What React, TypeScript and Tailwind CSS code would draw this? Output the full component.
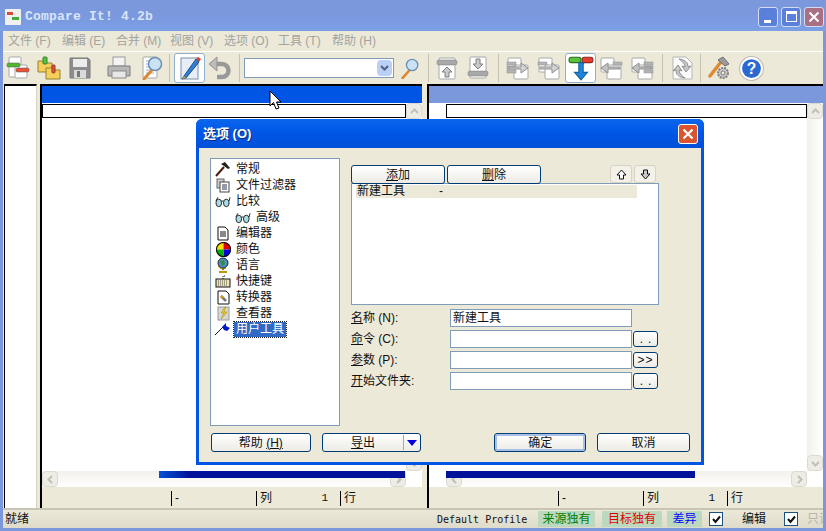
import type { ReactNode } from "react";

const CJK = "font-['Liberation_Sans','Noto_Sans_CJK_SC',sans-serif]";

/** 工具栏图标，24x24 画布 */
function Doc({ x = 4, y = 3, w = 13, h = 17 }: { x?: number; y?: number; w?: number; h?: number }) {
  return <rect x={x} y={y} width={w} height={h} fill="#fff" stroke="#a8a8a8" rx="1" />;
}

function Bar({ x, y, w, c, h = 4 }: { x: number; y: number; w: number; c: string; h?: number }) {
  return <rect x={x} y={y} width={w} height={h} rx="1.5" fill={c} stroke="#555" strokeWidth="0.5" />;
}

function ToolIcon({ children, size = 24 }: { children: ReactNode; size?: number }) {
  return (
    <svg width={size} height={size} viewBox="0 0 24 24" aria-hidden="true">
      {children}
    </svg>
  );
}

function Magnifier() {
  return (
    <g>
      <path d="M12 14 L4 23" stroke="#d98a33" strokeWidth="3" strokeLinecap="round" />
      <circle cx="15" cy="8" r="6.5" fill="#c9e2f5" stroke="#6d8fb3" strokeWidth="1.5" />
    </g>
  );
}

function Sep({ className }: { className: string }) {
  return <div className={`w-px h-[28px] bg-[#c5c2b0] ${className}`} />;
}

function PageArrow({ dir, count }: { dir: "left" | "right"; count: number }) {
  return (
    <ToolIcon>
      <Doc x={2} y={2} w={13} h={14} />
      <Doc x={8} y={9} w={14} h={14} />
      {Array.from({ length: count }).map((_, i) => (
        <rect key={i} x={dir === "right" ? 1 : 14} y={6 + i * 4} width={9} height={3} fill="#b5b5b5" stroke="#8e8e8e" strokeWidth="0.5" />
      ))}
      {dir === "right" ? (
        <path d="M3 11 H15 V7 L22 12 L15 17 V13 H3 Z" fill="#d2d2d2" stroke="#8f8f8f" />
      ) : (
        <path d="M21 11 H9 V7 L2 12 L9 17 V13 H21 Z" fill="#c2c2c2" stroke="#8f8f8f" />
      )}
    </ToolIcon>
  );
}

function Toolbar() {
  return (
    <div className="h-[33px] flex items-center bg-[#ece9d8] border-t border-white shrink-0 pl-[3px]">
      <ToolIcon>
        <Doc x={3} y={1} w={12} h={20} />
        <Doc x={9} y={9} w={12} h={13} />
        <Bar x={1} y={7} w={13} c="#4fb82e" />
        <Bar x={10} y={12} w={13} c="#e8503a" />
      </ToolIcon>
      <div className="ml-[7px]">
        <ToolIcon>
          <path d="M1 5h7l2 2h5v9H1z" fill="#f4cf5a" stroke="#97802c" />
          <path d="M9 12h7l2 2h5v9H9z" fill="#f4cf5a" stroke="#97802c" />
          <rect x="6" y="1" width="4" height="7" rx="1" fill="#55c23c" stroke="#3d7e2c" />
          <rect x="15" y="9" width="3" height="8" rx="1" fill="#e8503a" stroke="#9c3020" />
        </ToolIcon>
      </div>
      <div className="ml-[7px]">
        <ToolIcon>
          <path d="M2 2 H20 L22 4 V22 H2 Z" fill="#8d8d8d" stroke="#7a7a7a" />
          <rect x="5" y="3" width="14" height="8" fill="#ececec" />
          <rect x="6" y="14" width="12" height="8" fill="#dadada" />
          <rect x="9" y="15" width="3" height="6" fill="#777" />
        </ToolIcon>
      </div>
      <div className="ml-[15px]">
        <ToolIcon>
          <rect x="6" y="1" width="12" height="9" fill="#f4f4f4" stroke="#9a9a9a" />
          <path d="M1 10 H23 V20 H1 Z" fill="#b7b7b7" stroke="#7f7f7f" />
          <rect x="5" y="15" width="14" height="7" fill="#e8e8e8" stroke="#8a8a8a" />
        </ToolIcon>
      </div>
      <div className="ml-[9px]">
        <ToolIcon>
          <Doc x={3} y={1} w={14} h={21} />
          <path d="M6 5h8M6 8h8M6 11h5M6 14h5M6 17h8" stroke="#9db3cc" />
          <Magnifier />
        </ToolIcon>
      </div>
      <Sep className="ml-[5px]" />
      <div className="ml-[4px] w-[31px] h-[30px] flex items-center justify-center bg-white border border-[#8eb0cc] rounded-[3px]">
        <ToolIcon>
          <rect x="3" y="2" width="17" height="21" fill="#e8eef8" stroke="#7b8fa8" />
          <path d="M6 20 L4 23 L8 22 L21 6 L18 3 Z" fill="#2f7fd6" stroke="#1c4d8a" />
          <path d="M18 3 L21 6 L23 3 L20 1 Z" fill="#d8433a" />
          <path d="M6 20 L4 23 L8 22 Z" fill="#caa34a" />
        </ToolIcon>
      </div>
      <div className="ml-[3px]">
        <ToolIcon>
          <path d="M6 8 H14 A6.5 6.5 0 0 1 14 21 H9" fill="none" stroke="#999" strokeWidth="4.5" />
          <path d="M1 8 L9 1 V15 Z" fill="#bcbcbc" stroke="#949494" />
        </ToolIcon>
      </div>
      <Sep className="ml-[7px]" />
      <div className="ml-[4px] w-[150px] h-[20px] bg-white border border-[#7f9db9] flex justify-end items-center pr-px">
        <div className="w-[15px] h-[16px] bg-[#bcd0f5] rounded-sm flex items-center justify-center">
          <svg width="9" height="6" viewBox="0 0 9 6" aria-hidden="true">
            <path d="M1 1 L4.5 4.5 L8 1" fill="none" stroke="#4d6185" strokeWidth="2" />
          </svg>
        </div>
      </div>
      <div className="ml-[5px]">
        <ToolIcon size={21}>
          <Magnifier />
        </ToolIcon>
      </div>
      <Sep className="ml-[8px]" />
      <div className="ml-[6px]">
        <ToolIcon>
          <Doc x={4} y={2} w={16} h={21} />
          <rect x="2" y="4" width="20" height="5" rx="2" fill="#a9a9a9" stroke="#777" strokeWidth="0.5" />
          <path d="M12 11 L17 16 H14 V21 H10 V16 H7 Z" fill="#c9c9c9" stroke="#808080" />
        </ToolIcon>
      </div>
      <div className="ml-[7px]">
        <ToolIcon>
          <Doc x={4} y={1} w={16} h={21} />
          <rect x="2" y="15" width="20" height="5" rx="2" fill="#a9a9a9" stroke="#777" strokeWidth="0.5" />
          <path d="M12 13 L7 8 H10 V3 H14 V8 H17 Z" fill="#c9c9c9" stroke="#808080" />
        </ToolIcon>
      </div>
      <Sep className="ml-[8px]" />
      <div className="ml-[7px]">
        <PageArrow dir="right" count={3} />
      </div>
      <div className="ml-[7px]">
        <PageArrow dir="right" count={1} />
      </div>
      <div className="ml-[4px] w-[31px] h-[30px] flex items-center justify-center bg-white border border-[#8eb0cc] rounded-[3px]">
        <ToolIcon size={26}>
          <path d="M12 8 C11 6 9 5 6 5" fill="none" stroke="#555" />
          <path d="M14 8 C15 6 16 5 18 5" fill="none" stroke="#555" />
          <rect x="1" y="2" width="11" height="5" rx="2" fill="#57c23a" stroke="#2f6b20" />
          <rect x="13" y="2" width="10" height="5" rx="2" fill="#e43e2e" stroke="#8a2a20" />
          <path d="M10 7 H14 V16 H18 L12 23 L6 16 H10 Z" fill="#1d86dc" stroke="#15609f" />
        </ToolIcon>
      </div>
      <div className="ml-[3px]">
        <PageArrow dir="left" count={1} />
      </div>
      <div className="ml-[7px]">
        <PageArrow dir="left" count={3} />
      </div>
      <Sep className="ml-[8px]" />
      <div className="ml-[7px]">
        <ToolIcon>
          <path d="M3 1 H16 L22 7 V23 H3 Z" fill="#fafafa" stroke="#b5b5b5" />
          <path d="M9 3 C15 4 18 6 18 11 L21 10 L16 16 L12 10 L15 11 C15 8 13 6 9 3Z" fill="#c8c8c8" stroke="#8f8f8f" />
          <path d="M15 22 C9 21 6 19 6 14 L3 15 L8 9 L12 15 L9 14 C9 17 11 19 15 22Z" fill="#c8c8c8" stroke="#8f8f8f" />
        </ToolIcon>
      </div>
      <Sep className="ml-[6px]" />
      <div className="ml-[7px]">
        <ToolIcon>
          <circle cx="15" cy="17" r="5" fill="#c8c8c8" stroke="#808080" strokeWidth="2" strokeDasharray="2 1" />
          <circle cx="15" cy="17" r="2" fill="#ece9d8" stroke="#808080" />
          <path d="M2 20 L13 6" stroke="#de8a32" strokeWidth="3.5" strokeLinecap="round" />
          <path d="M10 4 L15 1 L21 8 L17 10 Z" fill="#9b9b9b" stroke="#6b6b6b" />
        </ToolIcon>
      </div>
      <div className="ml-[7px]">
        <ToolIcon size={25}>
          <circle cx="12" cy="12" r="11.5" fill="#fff" stroke="#b9b9b9" />
          <circle cx="12" cy="12" r="9" fill="#2c68d2" />
          <text x="12" y="17.5" textAnchor="middle" fontSize="15" fontWeight="700" fill="#fff" fontFamily="Liberation Sans, sans-serif">
            ?
          </text>
        </ToolIcon>
      </div>
    </div>
  );
}

function ScrollBtn({ d, className = "" }: { d: string; className?: string }) {
  return (
    <div className={`w-[16px] h-[16px] bg-[#eeede5] border border-[#dcdad0] rounded-sm flex items-center justify-center shrink-0 ${className}`}>
      <svg width="9" height="9" viewBox="0 0 9 9" aria-hidden="true">
        <path d={d} fill="none" stroke="#c0c0b8" strokeWidth="2" />
      </svg>
    </div>
  );
}

function Pane({ width, header, indent, barClass }: { width: string; header: string; indent: string; barClass: string }) {
  return (
    <div className={`${width} shrink-0 flex flex-col border-l-2 border-black relative`}>
      <div className={`h-[19px] border-t-2 border-black ${header}`} />
      <div className="flex-1 flex min-h-0 bg-white">
        <div className={`flex-1 flex flex-col min-w-0 ${indent}`}>
          <div className="h-[14px] mt-px border border-black bg-white" />
          <div className="flex-1" />
          <div className="flex h-[16px] bg-gradient-to-b from-[#f2f1ea] to-white">
            <ScrollBtn d="M6 1 L2.5 4.5 L6 8" />
            <div className="flex-1" />
            <ScrollBtn d="M3 1 L6.5 4.5 L3 8" />
          </div>
        </div>
        <div className="w-[16px] shrink-0 flex flex-col mb-[16px] bg-gradient-to-r from-[#f2f1ea] to-white">
          <ScrollBtn d="M1 6 L4.5 2.5 L8 6" />
          <div className="flex-1" />
          <ScrollBtn d="M1 3 L4.5 6.5 L8 3" />
        </div>
        <div className={`absolute bottom-[30px] h-[7px] ${barClass}`} />
      </div>
      <div className="h-[21px] bg-[#ece9d8] text-[12px] text-[#111] flex items-start pt-[4px]">
        <div className="flex w-full pl-[129px]">
          <span className="w-[85px] border-l border-black h-[15px] leading-[15px] pl-[3px]">-</span>
          <span className="w-[84px] border-l border-black h-[15px] leading-[15px] pl-[3px] flex justify-between pr-[12px]">
            <span>列</span>
            <span className="font-['Liberation_Mono',monospace] text-[11px]">1</span>
          </span>
          <span className="border-l border-black h-[15px] leading-[15px] pl-[3px]">行</span>
        </div>
      </div>
    </div>
  );
}

function TreeRow({ icon, label, selected, indent }: { icon: ReactNode; label: string; selected?: boolean; indent?: boolean }) {
  return (
    <div className={`h-[16px] flex items-center ${indent ? "pl-[24px]" : "pl-[4px]"}`}>
      <span className="w-[16px] h-[16px] flex items-center justify-center shrink-0">{icon}</span>
      <span className={`ml-[3px] h-[15px] leading-[15px] px-[2px] ${selected ? "bg-[#316ac5] text-white outline-1 outline-dotted outline-[#222]" : ""}`}>{label}</span>
    </div>
  );
}

function Glasses() {
  return (
    <svg width="17" height="13" viewBox="0 0 17 13" aria-hidden="true">
      <ellipse cx="4" cy="8" rx="3" ry="4" fill="#a9dbe6" stroke="#222" />
      <ellipse cx="12" cy="8" rx="3" ry="4" fill="#a9dbe6" stroke="#222" />
      <path d="M7 6 L9 6 M1 6 L3 2 M15 6 L16 2" stroke="#222" fill="none" />
    </svg>
  );
}

function XpBtn({ children, className = "", primary }: { children: ReactNode; className?: string; primary?: boolean }) {
  return (
    <button
      type="button"
      className={`h-[19px] flex items-center justify-center rounded-[3px] border border-[#003c74] bg-gradient-to-b from-white to-[#ecebe5] text-[12px] leading-none text-[#111] ${primary ? "shadow-[inset_0_0_0_2px_#a6c0e8]" : ""} ${className}`}
    >
      {children}
    </button>
  );
}

function Field({ label, hot, value, btn }: { label: string; hot: string; value?: string; btn?: string }) {
  return (
    <div className="flex items-center h-[18px] mb-[3px]">
      <span className="w-[99px] text-[12px] text-[#111]">
        <span className="underline">{hot}</span>
        {label}
      </span>
      <div className="w-[182px] h-[18px] border border-[#7f9db9] bg-white text-[12px] leading-[16px] pl-[2px] text-[#111]">{value}</div>
      {btn && <XpBtn className={`ml-[1px] w-[25px] !h-[16px] text-[11px] ${btn === ".." ? "tracking-[5px] pl-[5px]" : "tracking-[1px]"}`}>{btn}</XpBtn>}
    </div>
  );
}

function Dialog() {
  return (
    <div className={`absolute left-[196px] top-[119px] w-[508px] h-[346px] flex flex-col rounded-t-[6px] bg-[#0055e5] ${CJK} text-[12px] text-[#111]`}>
      <div className="h-[29px] shrink-0 flex items-center justify-between pl-[7px] pr-[6px] bg-gradient-to-b from-[#0a66ee] via-[#0055e5] to-[#0250d8] rounded-t-[6px]">
        <span className="text-white font-bold text-[13px] [text-shadow:1px_1px_#0a2a80]">选项 (O)</span>
        <div className="w-[20px] h-[20px] rounded-[3px] border border-white bg-[#d9542f] flex items-center justify-center">
          <svg width="12" height="12" viewBox="0 0 12 12" aria-hidden="true">
            <path d="M1.5 1.5 L10.5 10.5 M10.5 1.5 L1.5 10.5" stroke="#fff" strokeWidth="2.2" />
          </svg>
        </div>
      </div>
      <div className="mx-[3px] mb-[3px] flex-1 bg-[#ece9d8] flex flex-col px-[11px] pt-[10px] min-h-0">
        <div className="flex h-[268px]">
          <div className="w-[130px] border border-[#7f9db9] bg-white pt-[2px]">
            <TreeRow
              label="常规"
              icon={
                <svg width="16" height="16" viewBox="0 0 16 16" aria-hidden="true">
                  <path d="M1 15 L9 6" stroke="#4a1a10" strokeWidth="2" />
                  <path d="M6 3 L10 1 L15 7 L13 8 L9 5 Z" fill="#222" />
                </svg>
              }
            />
            <TreeRow
              label="文件过滤器"
              icon={
                <svg width="14" height="15" viewBox="0 0 14 15" aria-hidden="true">
                  <rect x="1" y="1" width="7" height="9" fill="#ccc" stroke="#666" />
                  <rect x="4" y="4" width="9" height="10" fill="#fff" stroke="#444" />
                  <path d="M6 7h5M6 9h5M6 11h5" stroke="#335" />
                </svg>
              }
            />
            <TreeRow label="比较" icon={<Glasses />} />
            <TreeRow label="高级" indent icon={<Glasses />} />
            <TreeRow
              label="编辑器"
              icon={
                <svg width="12" height="15" viewBox="0 0 12 15" aria-hidden="true">
                  <path d="M1 1 H8 L11 4 V14 H1 Z" fill="#fff" stroke="#111" />
                  <path d="M3 6h6M3 8h6M3 10h6" stroke="#111" />
                </svg>
              }
            />
            <TreeRow
              label="颜色"
              icon={
                <svg width="15" height="15" viewBox="0 0 14 14" aria-hidden="true">
                  <path d="M7 7 V0 A7 7 0 0 0 0 7 Z" fill="#ffe000" />
                  <path d="M7 7 V0 A7 7 0 0 1 14 7 Z" fill="#e00000" />
                  <path d="M7 7 H14 A7 7 0 0 1 7 14 Z" fill="#0000e0" />
                  <path d="M7 7 V14 A7 7 0 0 1 0 7 Z" fill="#00b000" />
                  <circle cx="7" cy="7" r="6.6" fill="none" stroke="#111" />
                </svg>
              }
            />
            <TreeRow
              label="语言"
              icon={
                <svg width="14" height="16" viewBox="0 0 14 16" aria-hidden="true">
                  <path d="M2 9 A5.5 5.5 0 0 0 10 11" fill="none" stroke="#b8960f" />
                  <circle cx="7" cy="6" r="5" fill="#4a90c8" stroke="#223" />
                  <path d="M4 4 L8 3 L9 7 L6 9 Z" fill="#3b8a3b" />
                  <path d="M7 11 V13" stroke="#8a6d10" strokeWidth="2" />
                  <path d="M3 15 H11" stroke="#b8960f" strokeWidth="2" />
                </svg>
              }
            />
            <TreeRow
              label="快捷键"
              icon={
                <svg width="16" height="13" viewBox="0 0 16 13" aria-hidden="true">
                  <rect x="1" y="4" width="14" height="8" fill="#f0e6b0" stroke="#111" />
                  <path d="M3 6h10M3 8h10M3 10h10" stroke="#555" strokeDasharray="1 1" />
                  <path d="M8 4 V1 H11" fill="none" stroke="#111" strokeDasharray="1 1" />
                </svg>
              }
            />
            <TreeRow
              label="转换器"
              icon={
                <svg width="13" height="15" viewBox="0 0 13 15" aria-hidden="true">
                  <path d="M1 1 H9 L12 4 V14 H1 Z" fill="#fff" stroke="#111" />
                  <path d="M4 6 L9 11" stroke="#777" strokeWidth="2.5" />
                  <path d="M4 6 L6 8" stroke="#c8a020" strokeWidth="2.5" />
                </svg>
              }
            />
            <TreeRow
              label="查看器"
              icon={
                <svg width="13" height="15" viewBox="0 0 13 15" aria-hidden="true">
                  <rect x="1" y="1" width="11" height="13" fill="#d8d8d0" stroke="#999" />
                  <path d="M8 1 L4 7 H7 L4 13 L10 6 H7 L9 1 Z" fill="#f0d020" stroke="#998010" strokeWidth="0.5" />
                </svg>
              }
            />
            <TreeRow
              label="用户工具"
              selected
              icon={
                <svg width="16" height="14" viewBox="0 0 16 14" aria-hidden="true">
                  <path d="M0 13 L8 5" stroke="#111" />
                  <path d="M7 5 L11 1 L11 4 L15 6 L12 9 L9 8 Z" fill="#0018c8" />
                </svg>
              }
            />
          </div>
          <div className="ml-[11px] w-[308px] flex flex-col">
            <div className="flex h-[18px] mt-[7px] relative z-10">
              <XpBtn className="w-[94px]">
                <span className="underline">添</span>加
              </XpBtn>
              <XpBtn className="ml-[2px] w-[94px]">
                <span className="underline">删</span>除
              </XpBtn>
              <button type="button" className="ml-[69px] w-[22px] h-[18px] border border-[#d6d3c2] rounded-[3px] bg-[#f3f1e8] flex items-center justify-center">
                <svg width="11" height="11" viewBox="0 0 11 11" aria-hidden="true">
                  <path d="M5.5 1 L10 6 H7.5 V10 H3.5 V6 H1 Z" fill="#fff" stroke="#111" />
                </svg>
              </button>
              <button type="button" className="ml-[2px] w-[22px] h-[18px] border border-[#d6d3c2] rounded-[3px] bg-[#f3f1e8] flex items-center justify-center">
                <svg width="11" height="11" viewBox="0 0 11 11" aria-hidden="true">
                  <path d="M5.5 10 L10 5 H7.5 V1 H3.5 V5 H1 Z" fill="#c8c8c8" stroke="#111" />
                </svg>
              </button>
            </div>
            <div className="h-[122px] border border-[#7f9db9] bg-white pt-px pl-[4px]">
              <div className="w-[281px] h-[13px] leading-[13px] bg-[#ece9d8] pl-px flex">
                <span className="w-[82px]">新建工具</span>
                <span>-</span>
              </div>
            </div>
            <div className="mt-[4px]">
              <Field hot="名" label="称 (N):" value="新建工具" />
              <Field hot="命" label="令 (C):" btn=".." />
              <Field hot="参" label="数 (P):" btn=">>" />
              <Field hot="开" label="始文件夹:" btn=".." />
            </div>
          </div>
        </div>
        <div className="flex mt-[7px] ml-px">
          <XpBtn className="w-[100px]">
            帮助&nbsp;<span className="underline">(H)</span>
          </XpBtn>
          <button type="button" className="ml-[11px] w-[100px] h-[19px] rounded-[3px] border border-[#003c74] bg-gradient-to-b from-white to-[#ecebe5] flex items-center text-[12px]">
            <span className="flex-1 text-center"><span className="underline">导</span>出</span>
            <span className="w-[17px] h-[15px] border-l border-[#a8a8a8] flex items-center justify-center">
              <svg width="10" height="6" viewBox="0 0 10 6" aria-hidden="true">
                <path d="M0 0 H10 L5 6 Z" fill="#0000e0" />
              </svg>
            </span>
          </button>
          <XpBtn primary className="ml-[73px] w-[92px]">确定</XpBtn>
          <XpBtn className="ml-[11px] w-[93px]">取消</XpBtn>
        </div>
      </div>
    </div>
  );
}

function Check() {
  return (
    <span className="w-[14px] h-[14px] border border-[#1c5180] bg-white flex items-center justify-center shrink-0">
      <svg width="9" height="9" viewBox="0 0 9 9" aria-hidden="true">
        <path d="M1 4 L3.5 7 L8 1.5" fill="none" stroke="#111" strokeWidth="2" />
      </svg>
    </span>
  );
}

export default function App() {
  const menus = ["文件 (F)", "编辑 (E)", "合并 (M)", "视图 (V)", "选项 (O)", "工具 (T)", "帮助 (H)"];
  return (
    <div className={`relative w-[826px] h-[531px] overflow-hidden flex flex-col bg-[#7b98dd] ${CJK}`}>
      <div className="h-[31px] shrink-0 flex items-center justify-between pl-[5px] pr-[2px] pt-[2px] bg-gradient-to-b from-[#7b98dd] via-[#7b98dd] to-[#7aa0e6]">
        <div className="flex items-center">
          <svg width="16" height="16" viewBox="0 0 16 16" aria-hidden="true">
            <rect x="0" y="0" width="16" height="16" rx="1" fill="#f0f0ee" />
            <rect x="2" y="3" width="6" height="3" fill="#d94a3a" />
            <rect x="7" y="8" width="7" height="3" fill="#3fae3a" />
          </svg>
          <span className="ml-[4px] font-['Liberation_Mono',monospace] font-bold text-[13px] text-[#d8e4f8] tracking-[0.2px]">Compare It! 4.2b</span>
        </div>
        <div className="flex gap-[3px]">
          <div className="w-[20px] h-[20px] rounded-[3px] border border-[#d4dcf2] bg-[#5a80dc] flex items-end pl-[5px] pb-[3px]">
            <span className="w-[7px] h-[3px] bg-white" />
          </div>
          <div className="w-[20px] h-[20px] rounded-[3px] border border-[#d4dcf2] bg-[#5a80dc] flex items-center justify-center">
            <span className="w-[11px] h-[11px] border border-white border-t-[3px]" />
          </div>
          <div className="w-[20px] h-[20px] rounded-[3px] border border-[#d4dcf2] bg-[#ab6f84] flex items-center justify-center">
            <svg width="12" height="12" viewBox="0 0 12 12" aria-hidden="true">
              <path d="M1.5 1.5 L10.5 10.5 M10.5 1.5 L1.5 10.5" stroke="#fff" strokeWidth="2" />
            </svg>
          </div>
        </div>
      </div>
      <div className="flex-1 mx-[3px] mb-[3px] flex flex-col min-h-0 bg-[#ece9d8]">
        <div className="h-[20px] shrink-0 flex items-center pl-[5px] text-[12px] text-[#a3a3a0]">
          {menus.map((m) => (
            <span key={m} className="w-[54px]">{m}</span>
          ))}
        </div>
        <Toolbar />
        <div className="flex-1 flex min-h-0 pl-px">
          <div className="w-[33px] border-t-2 border-x border-t-black border-l-black border-r-[#d8d5c5] bg-white shrink-0" />
          <div className="w-[3px] shrink-0" />
          <Pane width="w-[382px]" header="bg-[#0055e5]" indent="" barClass="left-[117px] right-[17px] bg-gradient-to-r from-[#0a50d8] to-[#00129a] to-[12%]" />
          <div className="w-[5px] shrink-0" />
          <Pane width="w-[396px]" header="bg-[#7b98dd]" indent="ml-[17px]" barClass="left-[17px] w-[249px] bg-[#00129a]" />
        </div>
        <div className="h-[20px] shrink-0 border-t-2 border-[#c8c5b4] bg-gradient-to-b from-[#ece9d8] to-[#dedbca] flex items-center text-[12px] text-[#111] overflow-hidden">
          <span className="pl-[2px] w-[434px] shrink-0">就绪</span>
          <span className="w-[98px] shrink-0 font-['DejaVu_Sans_Mono',monospace] text-[10px] whitespace-nowrap">Default Profile</span>
          <span className="ml-[3px] w-[57px] shrink-0 h-[16px] leading-[16px] text-center bg-[#bcd9c0] text-[#008000]">来源独有</span>
          <span className="ml-[7px] w-[60px] shrink-0 h-[16px] leading-[16px] text-center bg-[#bcd9c0] text-[#e00000]">目标独有</span>
          <span className="ml-[5px] w-[35px] shrink-0 h-[16px] leading-[16px] text-center bg-[#bcd9c0] text-[#0000ff]">差异</span>
          <span className="ml-[7px] shrink-0"><Check /></span>
          <span className="ml-[19px] w-[42px] shrink-0">编辑</span>
          <Check />
          <span className="ml-[9px] text-[#b5b5ad] whitespace-nowrap">只读</span>
        </div>
      </div>
      <Dialog />
      <svg className="absolute left-[269px] top-[90px]" width="13" height="21" viewBox="0 0 13 21" aria-hidden="true">
        <path d="M1 1 V16 L4.5 12.5 L7 19 L10 18 L7.5 12 H12 Z" fill="#fff" stroke="#000" />
      </svg>
    </div>
  );
}
